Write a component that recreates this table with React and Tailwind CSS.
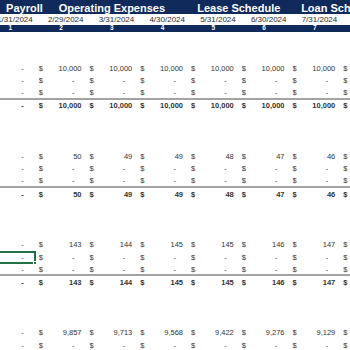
import React from "react";

const NAVY = "bg-[#102a5c]";

const dates = ["1/31/2024", "2/29/2024", "3/31/2024", "4/30/2024", "5/31/2024", "6/30/2024", "7/31/2024", "8/31/2024"];

// each section: detail rows then a total row (null = zero / dash)
const sections = [
  {
    rows: [
      [null, "10,000", "10,000", "10,000", "10,000", "10,000", "10,000", "10,000"],
      [null, null, null, null, null, null, null, null],
      [null, null, null, null, null, null, null, null],
    ],
    total: [null, "10,000", "10,000", "10,000", "10,000", "10,000", "10,000", "10,000"],
  },
  {
    rows: [
      [null, "50", "49", "49", "48", "47", "46", "45"],
      [null, null, null, null, null, null, null, null],
      [null, null, null, null, null, null, null, null],
    ],
    total: [null, "50", "49", "49", "48", "47", "46", "45"],
  },
  {
    rows: [
      [null, "143", "144", "145", "145", "146", "147", "148"],
      [null, null, null, null, null, null, null, null],
      [null, null, null, null, null, null, null, null],
    ],
    total: [null, "143", "144", "145", "145", "146", "147", "148"],
    selected: [1, 0],
  },
  {
    rows: [
      [null, "9,857", "9,713", "9,568", "9,422", "9,276", "9,129", "8,982"],
      [null, null, null, null, null, null, null, null],
    ],
  },
];

const grid = "grid grid-cols-[repeat(8,50.75px)] ml-[-15px]";

function Acc({ v, selected }) {
  return (
    <div className="relative flex h-full items-center justify-between pl-[3px]">
      <span>$</span>
      {v ? <span className="pr-[5px]">{v}</span> : <span className="pr-[12px]">-</span>}
      {selected && (
        <div className="absolute inset-0 border-2 border-[#217346]">
          <div className="absolute right-[-3px] bottom-[-3px] h-[4px] w-[4px] bg-[#217346] border border-white" />
        </div>
      )}
    </div>
  );
}

function Row({ values, bold, line, selectedCol }) {
  return (
    <div
      className={`${grid} h-[12.6px] ${bold ? "font-bold" : ""} ${
        line ? "border-b-2 border-[#a3a3a3]" : ""
      }`}
    >
      {values.map((v, i) => (
        <Acc key={i} v={v} selected={selectedCol === i} />
      ))}
    </div>
  );
}

export default function App() {
  return (
    <div className="w-[350px] h-[350px] overflow-hidden bg-white font-['Liberation_Sans',Arial,sans-serif] text-[7.5px] text-[#333]">
      {/* section titles */}
      <div className={`${NAVY} ${grid} h-[14px] text-[11px] font-bold text-white whitespace-nowrap`}>
        <div className="flex items-center justify-end -mr-[7px]">Payroll</div>
        <div className="col-span-3 flex items-center justify-center">Operating Expenses</div>
        <div className="col-span-2 flex items-center justify-center">Lease Schedule</div>
        <div className="col-span-2 flex items-center justify-center">Loan Schedule</div>
      </div>

      {/* dates */}
      <div className={`${grid} h-[11px] text-[8px] text-[#2a2a2a]`}>
        {dates.map((d) => (
          <div key={d} className="flex items-center justify-end pr-[3px]">
            {d}
          </div>
        ))}
      </div>

      {/* period numbers */}
      <div className={`${NAVY} ${grid} h-[7px] text-[6.5px] font-bold text-white leading-none`}>
        {dates.map((d, i) => (
          <div key={d} className="flex items-center justify-center">
            {i + 1}
          </div>
        ))}
      </div>

      <div className="h-[30px]" />

      {sections.map((s, si) => (
        <div key={si}>
          {s.rows.map((r, ri) => (
            <Row
              key={ri}
              values={r}
              line={s.total && ri === s.rows.length - 1}
              selectedCol={s.selected && s.selected[0] === ri ? s.selected[1] : undefined}
            />
          ))}
          {s.total && <Row values={s.total} bold />}
          {s.total && <div className="h-[37.8px]" />}
        </div>
      ))}
    </div>
  );
}
